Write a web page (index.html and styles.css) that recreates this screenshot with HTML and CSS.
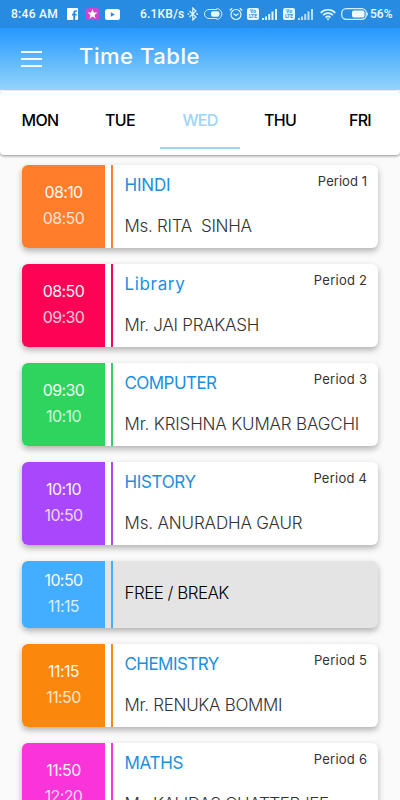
FILE: index.html
```html
<!DOCTYPE html>
<html lang="en">
<head>
<meta charset="utf-8">
<meta name="viewport" content="width=device-width, initial-scale=1">
<title>Time Table</title>
<link rel="stylesheet" href="styles.css">
</head>
<body>
<div class="screen">
  <header class="top">
    <div class="status">
      <span class="clock">8:46 AM</span>
      <svg class="i-fb" width="11" height="12" viewBox="0 0 11 12"><path fill="#fff" fill-rule="evenodd" d="M1 0h9a1 1 0 0 1 1 1v10a1 1 0 0 1-1 1H8.200V7.500h1.500V5.800H8.200V4.700q0-.9.9-.9h.8V2.200H8.600Q6.300 2.200 6.300 4.500v1.300H5v1.700h1.300V12H1a1 1 0 0 1-1-1V1a1 1 0 0 1 1-1z"/></svg>
      <svg class="i-star" width="13" height="12" viewBox="0 0 13 12"><rect width="13" height="12" rx="2.500" fill="#cf43d0"/><path fill="#fff" d="M6.500 1l1.300 3.400 3.700.2-2.900 2.300 1 3.600-3.100-2-3.100 2 1-3.600-2.900-2.300 3.700-.2z"/></svg>
      <svg class="i-yt" width="15" height="11" viewBox="0 0 15 11"><rect width="15" height="11" rx="2.500" fill="#fff"/><path fill="#268ce0" d="M5.800 3.200l4 2.300-4 2.300z"/></svg>
      <span class="speed">6.1KB/s</span>
      <svg class="i-bt" width="12" height="14" viewBox="0 0 12 14" fill="none" stroke="#dff6ff" stroke-width="1.200"><path d="M2.500 4l6.500 6L5.800 13V1L9 4l-6.500 6"/><path d="M.6 7h1.600M9.300 7H11" stroke-width="1.500"/></svg>
      <svg class="i-cast" width="19" height="12" viewBox="0 0 19 12" fill="none" stroke="#c9edff"><path d="M13 1.500H5a4.500 4.500 0 0 0 0 9h8"/><path d="M12.500.6a5.400 5.400 0 0 1 0 10.800"/><rect x="7" y="3.200" width="8.500" height="5.600" rx="1.800" fill="#e5f8ff" stroke="none"/></svg>
      <svg class="i-alarm" width="14" height="14" viewBox="0 0 14 14" fill="none" stroke="#dff6ff" stroke-width="1.200"><circle cx="7" cy="7.500" r="5"/><path d="M4.500 6.800L7 8.500l2.500-1.700M.8 3.500l2.400-2.300M13.200 3.500l-2.400-2.300"/></svg>
      <span class="sim"><span class="lte"><b>Vo</b><b>LTE</b></span>
      <svg width="16" height="12" viewBox="0 0 16 12" fill="#dff6ff"><path d="M0 10h2v2H0zM3 8.500h2V12H3zM6.200 6h2v6h-2zM9.500 3.500h2V12h-2zM13 1h2v11h-2z"/></svg></span>
      <span class="sim"><span class="lte"><b>Vo</b><b>LTE</b></span>
      <svg width="16" height="12" viewBox="0 0 16 12" fill="#b9e2fa"><path d="M0 10h2v2H0zM3 8.500h2V12H3zM6.200 6h2v6h-2zM9.500 3.500h2V12h-2zM13 1h2v11h-2z"/></svg></span>
      <svg class="i-wifi" width="16" height="13" viewBox="0 0 16 13" fill="none" stroke="#dff6ff" stroke-width="1.700"><path d="M.7 4.800a10.300 10.300 0 0 1 14.600 0M3.100 7.200a7 7 0 0 1 9.800 0M5.500 9.500a3.600 3.600 0 0 1 5 0"/><path d="M6.300 10.500L8 12.500l1.700-2z" fill="#dff6ff" stroke="none"/></svg>
      <svg class="i-batt" width="27" height="12" viewBox="0 0 27 12"><rect x=".7" y=".7" width="24.600" height="10.600" rx="4.500" fill="none" stroke="#d3f0ff" stroke-width="1.300"/><rect x="11" y="2.500" width="12.500" height="7" rx="1.800" fill="#effaff"/><path d="M26.300 4.500v3" stroke="#d3f0ff"/></svg>
      <span class="pct">56%</span>
    </div>
    <div class="appbar">
      <span class="menu"><i></i><i></i><i></i></span>
      <h1>Time Table</h1>
    </div>
  </header>
  <nav class="tabs">
    <a>MON</a><a>TUE</a><a class="active">WED</a><a>THU</a><a>FRI</a>
  </nav>
  <main class="list">
    <article class="card orange">
      <div class="time"><span class="from">08:10</span><span class="to">08:50</span></div>
      <div class="info"><div class="head"><h2 class="hindi">HINDI</h2><span class="period first">Period 1</span></div><p class="sinha">Ms. RITA&nbsp; SINHA</p></div>
    </article>
    <article class="card red">
      <div class="time"><span class="from">08:50</span><span class="to">09:30</span></div>
      <div class="info"><div class="head"><h2 class="library">Library</h2><span class="period">Period 2</span></div><p class="prakash">Mr. JAI PRAKASH</p></div>
    </article>
    <article class="card green">
      <div class="time"><span class="from">09:30</span><span class="to">10:10</span></div>
      <div class="info"><div class="head"><h2 class="computer">COMPUTER</h2><span class="period">Period 3</span></div><p class="bagchi">Mr. KRISHNA KUMAR BAGCHI</p></div>
    </article>
    <article class="card purple">
      <div class="time"><span class="from">10:10</span><span class="to">10:50</span></div>
      <div class="info"><div class="head"><h2 class="history">HISTORY</h2><span class="period">Period 4</span></div><p class="gaur">Ms. ANURADHA GAUR</p></div>
    </article>
    <article class="card blue break">
      <div class="time"><span class="from">10:50</span><span class="to">11:15</span></div>
      <div class="info"><p class="free">FREE / BREAK</p></div>
    </article>
    <article class="card amber">
      <div class="time"><span class="from">11:15</span><span class="to">11:50</span></div>
      <div class="info"><div class="head"><h2 class="chemistry">CHEMISTRY</h2><span class="period">Period 5</span></div><p class="bommi">Mr. RENUKA BOMMI</p></div>
    </article>
    <article class="card pink">
      <div class="time"><span class="from">11:50</span><span class="to">12:20</span></div>
      <div class="info"><div class="head"><h2 class="maths">MATHS</h2><span class="period">Period 6</span></div><p class="chatterjee">Mr. KALIDAS CHATTERJEE</p></div>
    </article>
  </main>
</div>
</body>
</html>
```
FILE: styles.css
```css
* { box-sizing: border-box; }
body { margin: 0; font-family: Inter, "Liberation Sans", sans-serif; background: #fafafa; }
h1, h2, p { margin: 0; font-weight: 400; }
svg { display: block; flex: none; }
.screen { height: 800px; overflow: hidden; display: flex; flex-direction: column; }

.top { height: 90px; flex: none; background: linear-gradient(#2196ff 26px, #94d5fa 90px); }
.status { height: 28px; background: #278ce1; display: flex; align-items: center; padding-left: 11px; color: #f0fcff; font: 500 12px/28px Roboto, sans-serif; white-space: nowrap; }
.clock { width: 56px; letter-spacing: .3px; }
.i-star { margin-left: 8px; }
.i-yt { margin-left: 6px; }
.speed { margin-left: 20px; width: 45px; letter-spacing: .2px; }
.i-bt { margin-left: 2px; }
.i-cast { margin-left: 5px; }
.i-alarm { margin-left: 6px; }
.sim { display: flex; align-items: center; gap: 3px; margin-left: 4px; }
.sim + .sim { margin-left: 5px; }
.lte { width: 12px; height: 12px; border-radius: 2px; background: #e5f8ff; color: #318fdb; display: flex; flex-direction: column; align-items: center; justify-content: center; }
.lte b { font: 700 5px/5px Roboto, sans-serif; }
.i-wifi { margin-left: 6px; }
.i-batt { margin-left: 5px; }
.pct { margin-left: 2px; }
.appbar { display: flex; align-items: center; height: 59px; padding: 0 21px; }
.menu { display: flex; flex-direction: column; gap: 5px; width: 21px; margin-top: 2px; }
.menu i { height: 2px; background: #f4fbff; }
h1 { margin: -3px 0 0 37px; color: #fff; font-size: 22px; line-height: 30px; font-weight: 500; letter-spacing: .55px; }

.tabs { height: 64px; margin-top: 1px; flex: none; display: grid; grid-template-columns: repeat(5, 1fr); background: #fff; border-radius: 4px; box-shadow: 0 1px 3px rgba(0,0,0,.42); font-size: 16px; font-weight: 500; color: #000; }
.tabs a { text-align: center; line-height: 58px; height: 58px; letter-spacing: -.7px; }
.tabs .active { color: #9dd4f3; border-bottom: 2px solid #9dd4f3; }

.list { padding: 10px 22px 0; display: flex; flex-direction: column; gap: 16px; }
.card { height: 83px; flex: none; display: flex; background: #fff; border-radius: 6px; box-shadow: 0 3px 6px rgba(0,0,0,.3); }
.time { width: 83px; background: var(--tone); border-radius: 6px 0 0 6px; display: flex; flex-direction: column; align-items: center; padding-top: 14px; font-size: 16px; line-height: 26px; color: #fff; letter-spacing: -.6px; }
.from { opacity: .95; }
.to { opacity: .78; }
.info { flex: 1; margin-left: 6px; border-left: 2px solid var(--tone); padding: 7px 11px 0 11.5px; }
.head { display: flex; justify-content: space-between; height: 42px; }
h2 { font-size: 17px; line-height: 26px; color: #1b8fe0; font-weight: 400; }
.period { font-size: 13px; line-height: 18px; color: #333; letter-spacing: .25px; margin-right: -.25px; }
.period.first { letter-spacing: .05px; margin-right: 0; }
.info p { font-size: 17px; line-height: 24px; color: #333; font-weight: 300; white-space: nowrap; }
.break { height: 67px; background: #e4e4e4; }
.break .time { padding-top: 6px; }
.break .info { padding-top: 20px; }
.info .free { color: #000; letter-spacing: -.55px; }

.hindi { letter-spacing: -.2px; }
.library { letter-spacing: .65px; }
.computer, .chemistry { letter-spacing: -.55px; }
.history { letter-spacing: -.35px; }
.maths { letter-spacing: -.3px; }
.sinha { letter-spacing: -.28px; }
.prakash { letter-spacing: -.27px; }
.bagchi { letter-spacing: -.16px; }
.gaur { letter-spacing: -.15px; }
.bommi { letter-spacing: -.3px; }
.chatterjee { letter-spacing: -.38px; }

.orange { --tone: #ff7d2b; }
.red { --tone: #fc0356; }
.green { --tone: #2fd45e; }
.purple { --tone: #a847fb; }
.blue { --tone: #43adff; }
.amber { --tone: #fb870c; }
.pink { --tone: #f934d9; }
```
